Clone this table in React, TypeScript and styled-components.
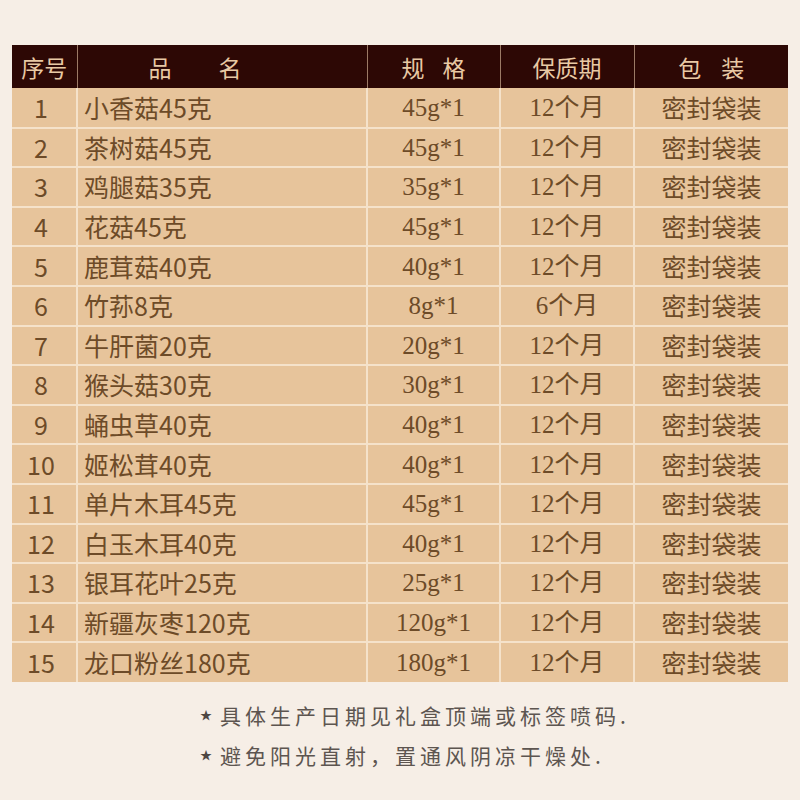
import styled, { createGlobalStyle } from "styled-components";

const GlobalStyle = createGlobalStyle`
    html, body {
        margin: 0;
        padding: 0;
        background-color: #f6eee6;
    }
    body {
        font-family: "Noto Sans CJK SC", "Noto Sans", sans-serif;
    }
`

const Page = styled.div`
    width: 800px;
    height: 800px;
    padding: 45px 12px 0;
    box-sizing: border-box;
    background-color: #f6eee6;
`

const SpecTable = styled.table`
    width: 776px;
    border-collapse: collapse;
    table-layout: fixed;
    background-color: #e7c49b;
`

const HeadRow = styled.tr`
    height: 43px;
    background-color: #2d0805;
`

const HeadCell = styled.th<{ $spacing?: number; $align?: string; $indent?: number }>`
    padding: 0;
    color: #e9c9a4;
    font-size: 23px;
    font-weight: 400;
    text-align: ${(p) => p.$align || "center"};
    letter-spacing: ${(p) => p.$spacing || 0}px;
    text-indent: ${(p) => p.$indent ?? (p.$spacing || 0)}px;
    border-left: 1px solid #9c7a66;
    white-space: nowrap;

    &:first-child {
        border-left: none;
    }
`

const BodyRow = styled.tr`
    height: 39.6px;
    border-top: 2px solid #f5e2ca;

    &:first-child {
        border-top: none;
    }
`

const Cell = styled.td<{ $align?: string; $serif?: boolean }>`
    padding: 0 0 0;
    color: #6d4b28;
    font-size: 25px;
    line-height: 1;
    text-align: ${(p) => p.$align || "center"};
    font-family: ${(p) =>
        p.$serif
            ? `"Liberation Serif", "Noto Sans CJK SC", serif`
            : `"Noto Sans CJK SC", "Noto Sans", sans-serif`};
    border-left: 2px solid #f5e2ca;
    white-space: nowrap;

    &:first-child {
        border-left: none;
        padding-right: 6px;
    }
`

const NameCell = styled(Cell)`
    padding-left: 6px;
`

const Notes = styled.div`
    display: flex;
    flex-direction: column;
    gap: 12px;
    padding: 19px 0 0 188px;
`

const Note = styled.p`
    margin: 0;
    display: flex;
    align-items: center;
    color: #5d5550;
    font-size: 21px;
    line-height: 28px;
    letter-spacing: 4px;

    .note__star {
        font-size: 12px;
        width: 12px;
        letter-spacing: 0;
        text-align: center;
        margin-right: 8px;
        color: #4f4743;
    }
`

const items = [
    ["小香菇45克", "45g*1", "12个月"],
    ["茶树菇45克", "45g*1", "12个月"],
    ["鸡腿菇35克", "35g*1", "12个月"],
    ["花菇45克", "45g*1", "12个月"],
    ["鹿茸菇40克", "40g*1", "12个月"],
    ["竹荪8克", "8g*1", "6个月"],
    ["牛肝菌20克", "20g*1", "12个月"],
    ["猴头菇30克", "30g*1", "12个月"],
    ["蛹虫草40克", "40g*1", "12个月"],
    ["姬松茸40克", "40g*1", "12个月"],
    ["单片木耳45克", "45g*1", "12个月"],
    ["白玉木耳40克", "40g*1", "12个月"],
    ["银耳花叶25克", "25g*1", "12个月"],
    ["新疆灰枣120克", "120g*1", "12个月"],
    ["龙口粉丝180克", "180g*1", "12个月"],
]

export default function App() {
    return (
        <Page>
            <GlobalStyle />
            <SpecTable>
                <colgroup>
                    <col style={{ width: 65 }} />
                    <col style={{ width: 290 }} />
                    <col style={{ width: 133 }} />
                    <col style={{ width: 134 }} />
                    <col style={{ width: 154 }} />
                </colgroup>
                <thead>
                    <HeadRow>
                        <HeadCell>序号</HeadCell>
                        <HeadCell $align="left" $spacing={47} $indent={71}>品名</HeadCell>
                        <HeadCell $spacing={18}>规格</HeadCell>
                        <HeadCell>保质期</HeadCell>
                        <HeadCell $spacing={20}>包装</HeadCell>
                    </HeadRow>
                </thead>
                <tbody>
                    {items.map(([name, spec, life], i) => (
                        <BodyRow key={name}>
                            <Cell>{i + 1}</Cell>
                            <NameCell $align="left">{name}</NameCell>
                            <Cell $serif>{spec}</Cell>
                            <Cell $serif>{life}</Cell>
                            <Cell>密封袋装</Cell>
                        </BodyRow>
                    ))}
                </tbody>
            </SpecTable>
            <Notes>
                <Note><span className="note__star">★</span>具体生产日期见礼盒顶端或标签喷码.</Note>
                <Note><span className="note__star">★</span>避免阳光直射，置通风阴凉干燥处.</Note>
            </Notes>
        </Page>
    )
}
